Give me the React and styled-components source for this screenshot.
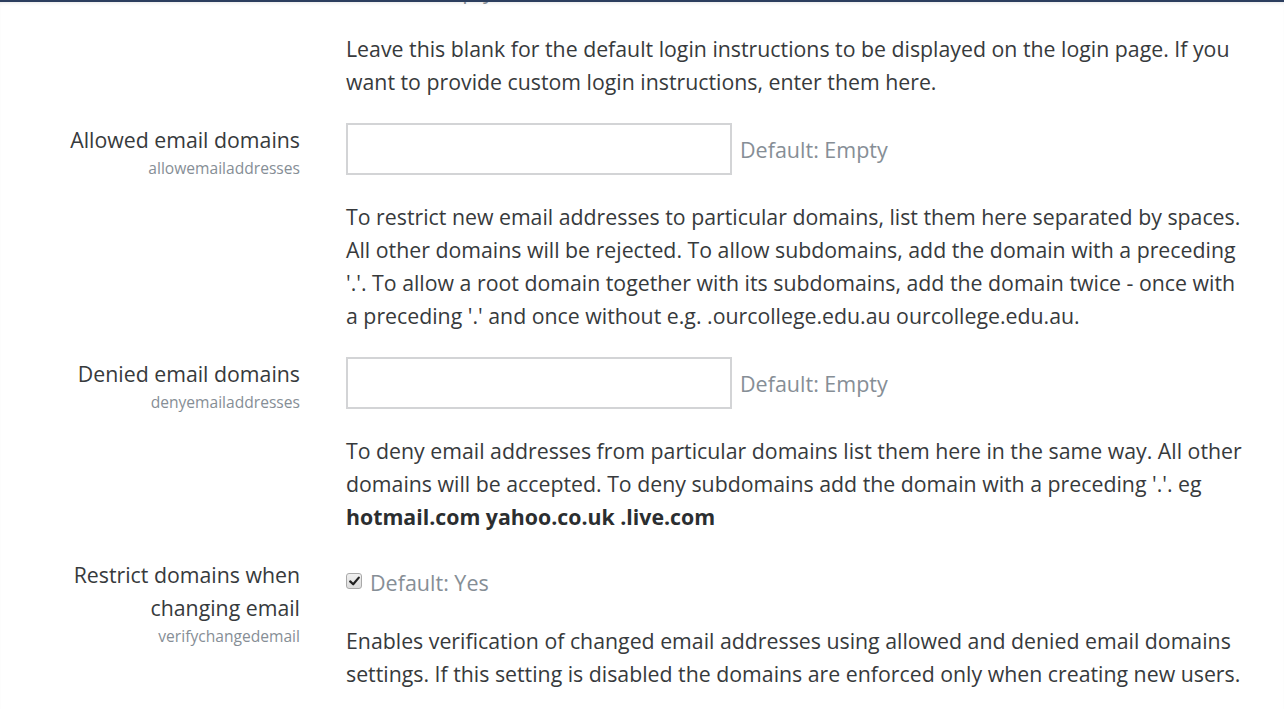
import React, { Fragment } from "react";
import styled, { createGlobalStyle } from "styled-components";

const GlobalStyle = createGlobalStyle`
  html, body {
    margin: 0;
    padding: 0;
    background: #fff;
  }
  body {
    font-family: "Open Sans", "Liberation Sans", sans-serif;
    color: #373a3c;
    overflow: hidden;
  }
`;

const Page = styled.div`
  height: 709px;
  overflow: hidden;
  border-top: 2px solid #2c3e5e;
  box-shadow: inset 0 3px 4px -3px rgba(0, 0, 0, 0.15);
`;

const Form = styled.div`
  margin-top: -28px;
`;

const Setting = styled.div`
  display: grid;
  grid-template-columns: 300px 1fr;
  column-gap: 46px;
  margin-bottom: 25px;
`;

const LabelCol = styled.div`
  text-align: right;
`;

const Label = styled.div`
  font-size: 21.3px;
  line-height: 33px;
  color: #373a3c;
`;

const Name = styled.div`
  font-size: 15.6px;
  line-height: 24px;
  color: #868e96;
`;

const Control = styled.div`
  display: flex;
  align-items: center;
  gap: 8px;
  padding-top: ${(p) => (p.$check ? "8px" : "0")};
  margin-bottom: 25px;
`;

const TextInput = styled.div`
  width: 382px;
  height: 48px;
  border: 2px solid #d3d4d6;
  background: #fff;
`;

const Default = styled.span`
  font-size: 21.5px;
  line-height: 33px;
  color: #868e96;
`;

const Check = styled.span`
  width: 14px;
  height: 14px;
  border: 1px solid #a9a9a9;
  border-radius: 3px;
  background: linear-gradient(#f0f0f0, #dcdcdc);
  display: inline-flex;
  align-items: center;
  justify-content: center;
  margin-top: -4px;
`;

const Description = styled.div`
  font-size: 21.3px;
  line-height: 33px;
  color: #373a3c;
  white-space: nowrap;

  b {
    font-weight: 700;
    color: #2b2e30;
  }
`;

const CheckBox = () => (
  <Check>
    <svg width="11" height="10" viewBox="0 0 11 10">
      <path d="M1.2 5.4 L4.2 8.3 L9.8 1.6" fill="none" stroke="#222" strokeWidth="2.2" strokeLinecap="round" strokeLinejoin="round" />
    </svg>
  </Check>
);

const App = () => {
  return (
    <Fragment>
      <GlobalStyle />
      <Page>
        <Form>
          <Setting>
            <LabelCol />
            <div>
              <Control>
                <Default>Default: Empty</Default>
              </Control>
              <Description>
                Leave this blank for the default login instructions to be displayed on the login page. If you
                <br />
                want to provide custom login instructions, enter them here.
              </Description>
            </div>
          </Setting>

          <Setting>
            <LabelCol>
              <Label>Allowed email domains</Label>
              <Name>allowemailaddresses</Name>
            </LabelCol>
            <div>
              <Control>
                <TextInput />
                <Default>Default: Empty</Default>
              </Control>
              <Description>
                To restrict new email addresses to particular domains, list them here separated by spaces.
                <br />
                All other domains will be rejected. To allow subdomains, add the domain with a preceding
                <br />
                '.'. To allow a root domain together with its subdomains, add the domain twice - once with
                <br />
                a preceding '.' and once without e.g. .ourcollege.edu.au ourcollege.edu.au.
              </Description>
            </div>
          </Setting>

          <Setting>
            <LabelCol>
              <Label>Denied email domains</Label>
              <Name>denyemailaddresses</Name>
            </LabelCol>
            <div>
              <Control>
                <TextInput />
                <Default>Default: Empty</Default>
              </Control>
              <Description>
                To deny email addresses from particular domains list them here in the same way. All other
                <br />
                domains will be accepted. To deny subdomains add the domain with a preceding '.'. eg
                <br />
                <b>hotmail.com yahoo.co.uk .live.com</b>
              </Description>
            </div>
          </Setting>

          <Setting>
            <LabelCol>
              <Label>
                Restrict domains when
                <br />
                changing email
              </Label>
              <Name>verifychangedemail</Name>
            </LabelCol>
            <div>
              <Control $check>
                <CheckBox />
                <Default>Default: Yes</Default>
              </Control>
              <Description>
                Enables verification of changed email addresses using allowed and denied email domains
                <br />
                settings. If this setting is disabled the domains are enforced only when creating new users.
              </Description>
            </div>
          </Setting>
        </Form>
      </Page>
    </Fragment>
  );
};

export default App;
